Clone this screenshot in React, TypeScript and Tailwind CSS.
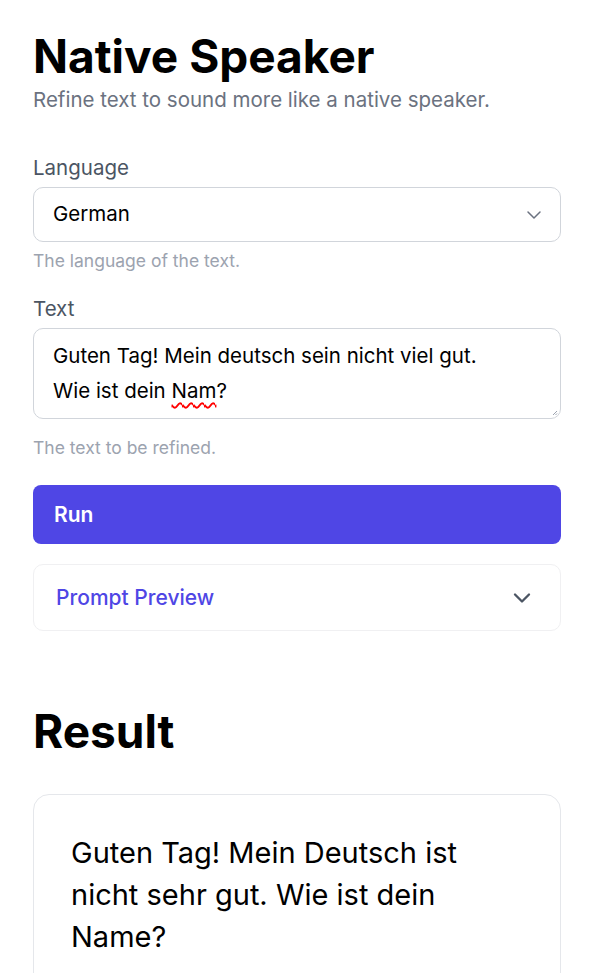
import { ChevronDown } from "lucide-react"

export default function App() {
  return (
    <main className="min-h-screen bg-white pl-[33px] pr-[31px] pt-[28px] font-['Inter',sans-serif] text-black">
      <h1 className="text-[46px] leading-[56px] font-bold">Native Speaker</h1>
      <p className="mt-[2px] text-[20.5px] leading-[28px] text-[#6b7280]">Refine text to sound more like a native speaker.</p>

      <div className="mt-[40px]">
        <label className="block text-[20.5px] leading-[28px] text-[#4b5563]">Language</label>
        <div className="mt-[5px] flex h-[55px] items-center justify-between rounded-[10px] border border-[#d1d5db] pl-[19px] pr-[14px]">
          <span className="text-[20.5px]">German</span>
          <ChevronDown className="h-[24px] w-[24px] text-[#6b7280]" strokeWidth={1.5} />
        </div>
        <p className="mt-[7px] text-[17.5px] leading-[24px] text-[#9ca3af]">The language of the text.</p>
      </div>

      <div className="mt-[22px]">
        <label className="block text-[20.5px] leading-[28px] text-[#4b5563]">Text</label>
        <div className="relative mt-[5px] h-[91px] rounded-[10px] border border-[#d1d5db] px-[19px] pt-[9px] text-[20.5px] leading-[35px]">
          <div>Guten Tag! Mein deutsch sein nicht viel gut.</div>
          <div>
            Wie ist dein <span className="underline decoration-wavy decoration-[#ff0000] decoration-[1.5px] underline-offset-[4px]">Nam</span>?
          </div>
          <svg className="absolute bottom-[2px] right-[2px] h-[6px] w-[6px] text-[#9ca3af]" viewBox="0 0 6 6">
            <path d="M5 1 1 5M5 3.5 3.5 5" stroke="currentColor" strokeWidth="1" />
          </svg>
        </div>
        <p className="mt-[17px] text-[17.5px] leading-[24px] text-[#9ca3af]">The text to be refined.</p>
      </div>

      <button className="mt-[25px] flex h-[59px] w-full items-center rounded-[8px] bg-[#4f46e5] px-[21px] text-[21px] font-semibold text-white">
        Run
      </button>

      <div className="mt-[20px] flex h-[67px] items-center justify-between rounded-[10px] border border-[#f0f0f2] pl-[22px] pr-[24px]">
        <span className="text-[21px] font-medium text-[#4f46e5]">Prompt Preview</span>
        <ChevronDown className="h-[28px] w-[28px] text-[#4b5563]" strokeWidth={2} />
      </div>

      <h2 className="mt-[72px] text-[46px] leading-[56px] font-bold">Result</h2>

      <div className="mt-[35px] rounded-[16px] border border-[#e5e7eb] px-[37px] pt-[37px] pb-[30px]">
        <p className="text-[29px] leading-[42px]">Guten Tag! Mein Deutsch ist nicht sehr gut. Wie ist dein Name?</p>
      </div>
    </main>
  )
}
